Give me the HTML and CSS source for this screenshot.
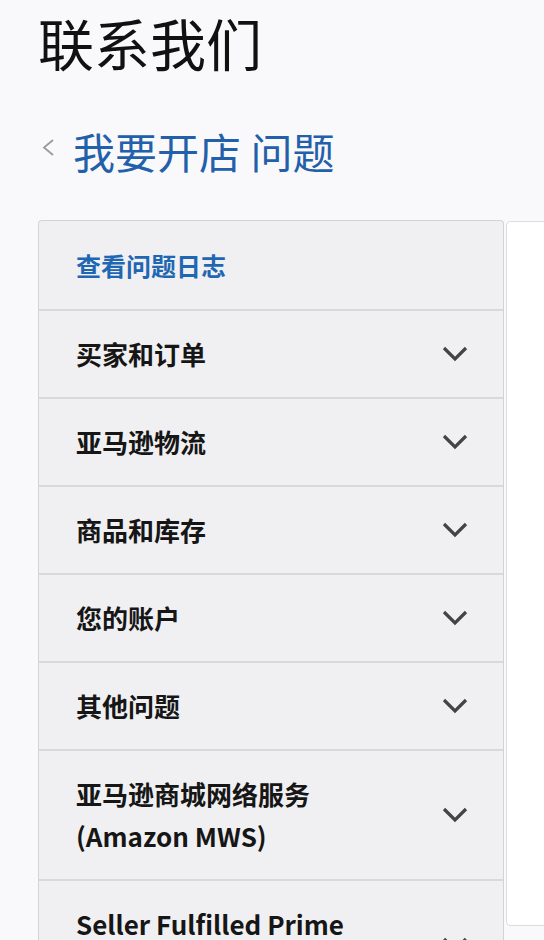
FILE: index.html
```html
<!DOCTYPE html>
<html lang="zh-CN">
<head>
<meta charset="utf-8">
<title>联系我们</title>
<link rel="stylesheet" href="styles.css">
</head>
<body>
<div class="page">
  <h1 class="title">联系我们</h1>
  <div class="crumb">
    <svg class="crumb-icon" width="16" height="18" viewBox="0 0 16 18"><path d="M13 2 L4 9.5 L13 17" fill="none" stroke="#9a9a9c" stroke-width="1.8"/></svg>
    <span class="crumb-text">我要开店 问题</span>
  </div>
  <div class="content">
    <div class="panel">
      <div class="row head"><span class="head-text">查看问题日志</span></div>
      <div class="row"><span class="label">买家和订单</span><svg class="chev" width="26" height="16" viewBox="0 0 26 16"><path d="M2 2 L13 13 L24 2" fill="none" stroke="#444" stroke-width="3.2"/></svg></div>
      <div class="row"><span class="label">亚马逊物流</span><svg class="chev" width="26" height="16" viewBox="0 0 26 16"><path d="M2 2 L13 13 L24 2" fill="none" stroke="#444" stroke-width="3.2"/></svg></div>
      <div class="row"><span class="label">商品和库存</span><svg class="chev" width="26" height="16" viewBox="0 0 26 16"><path d="M2 2 L13 13 L24 2" fill="none" stroke="#444" stroke-width="3.2"/></svg></div>
      <div class="row"><span class="label">您的账户</span><svg class="chev" width="26" height="16" viewBox="0 0 26 16"><path d="M2 2 L13 13 L24 2" fill="none" stroke="#444" stroke-width="3.2"/></svg></div>
      <div class="row"><span class="label">其他问题</span><svg class="chev" width="26" height="16" viewBox="0 0 26 16"><path d="M2 2 L13 13 L24 2" fill="none" stroke="#444" stroke-width="3.2"/></svg></div>
      <div class="row"><span class="label">亚马逊商城网络服务<br>(Amazon MWS)</span><svg class="chev" width="26" height="16" viewBox="0 0 26 16"><path d="M2 2 L13 13 L24 2" fill="none" stroke="#444" stroke-width="3.2"/></svg></div>
      <div class="row"><span class="label">Seller Fulfilled Prime<br>(卖家自配送 Prime)</span><svg class="chev" width="26" height="16" viewBox="0 0 26 16"><path d="M2 2 L13 13 L24 2" fill="none" stroke="#444" stroke-width="3.2"/></svg></div>
    </div>
    <div class="side-card"></div>
  </div>
</div>
</body>
</html>
```

FILE: styles.css
```css
html, body {
  margin: 0;
  padding: 0;
  overflow: hidden;
  background: #f9f9fb;
  font-family: "Noto Sans CJK SC", "Noto Sans", sans-serif;
}

.page {
  padding: 14px 0 0 38px;
  width: 600px;
}

.title {
  margin: 0;
  font-size: 56px;
  line-height: 56px;
  font-weight: 400;
  color: #111;
  letter-spacing: 0;
}

.crumb {
  display: flex;
  align-items: center;
  margin-top: 60px;
  height: 42px;
}

.crumb-icon {
  margin-left: 2px;
  margin-right: 17px;
  margin-top: -8px;
}

.crumb-text {
  font-size: 42px;
  line-height: 42px;
  color: #2360aa;
}

.content {
  display: flex;
  align-items: flex-start;
  margin-top: 48px;
}

.panel {
  width: 464px;
  flex: none;
  background: #f0f0f2;
  border: 1px solid #d3d3d6;
  border-bottom: none;
  border-radius: 4px 4px 0 0;
}

.row {
  display: flex;
  align-items: center;
  justify-content: space-between;
  padding: 22px 35px 22px 37px;
  border-top: 2px solid #d9d9dc;
}

.row.head {
  border-top: none;
  padding-top: 23px;
  padding-bottom: 23px;
}

.head-text {
  font-size: 25px;
  line-height: 42px;
  font-weight: 700;
  color: #1f66b3;
}

.label {
  font-size: 26px;
  line-height: 42px;
  font-weight: 700;
  color: #161616;
}

.chev {
  flex: none;
}

.side-card {
  flex: none;
  width: 80px;
  height: 703px;
  margin-left: 2px;
  margin-top: 1px;
  background: #fff;
  border: 1px solid #dcdcdf;
  border-right: none;
  border-radius: 5px 0 0 5px;
}
```
